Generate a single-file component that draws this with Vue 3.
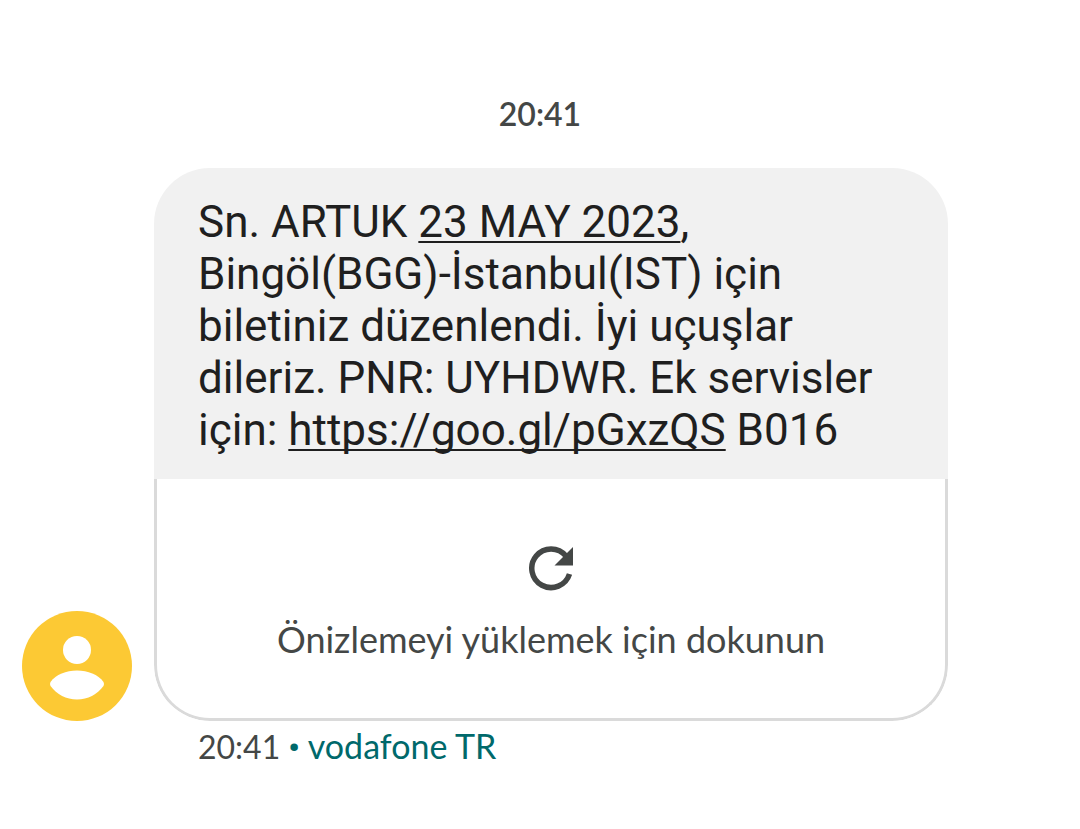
<script setup>
const time = '20:41'
</script>

<template>
  <main class="thread">
    <time class="stamp">{{ time }}</time>
    <div class="message">
      <svg class="avatar" viewBox="0 0 110 110" role="img" aria-label="Contact">
        <circle cx="55" cy="55" r="55" fill="#fcc934" />
        <circle cx="55" cy="39" r="14" fill="#fff" />
        <path d="M28.500 71C34 63.500 44 59.500 55 59.500S76 63.500 81.500 71Q82.500 73 81.500 75C75 83.500 66 88.500 55 88.500S35 83.500 28.500 75Q27.500 73 28.500 71Z" fill="#fff" />
      </svg>
      <article class="bubble">
        <p class="body">
          Sn. ARTUK <a href="#date">23 MAY 2023</a>,<br />
          Bingöl(BGG)-İstanbul(IST) için<br />
          biletiniz düzenlendi. İyi uçuşlar<br />
          dileriz. PNR: UYHDWR. Ek servisler<br />
          için: <a href="#link">https://goo.gl/pGxzQS</a> B016
        </p>
        <button class="preview" type="button">
          <svg class="refresh" viewBox="0 0 46 46" aria-hidden="true">
            <path d="M38 11A19.300 19.300 0 1 0 41.500 29" fill="none" stroke="#444746" stroke-width="5.500" />
            <path d="M45 2V20.500H26.500Z" fill="#444746" />
          </svg>
          <span>Önizlemeyi yüklemek için dokunun</span>
        </button>
      </article>
    </div>
    <footer class="meta">
      <time>{{ time }}</time>
      <span class="dot">•</span>
      <span class="carrier">vodafone TR</span>
    </footer>
  </main>
</template>

<style>
body {
  margin: 0;
  background: #fff;
}
</style>

<style scoped>
.thread {
  display: flex;
  flex-direction: column;
  padding: 92px 132px 60px 22px;
  font-family: Roboto, "Noto Sans", sans-serif;
  color: #444746;
}
.stamp {
  align-self: center;
  margin-left: 110px;
  font: 600 32px/44px Lato, sans-serif;
}
.message {
  display: flex;
  align-items: flex-end;
  gap: 22px;
  margin-top: 32px;
}
.avatar {
  width: 110px;
  height: 110px;
  flex: none;
}
.bubble {
  flex: 1;
  overflow: hidden;
  border-radius: 56px;
}
.body {
  margin: 0;
  padding: 28px 44px 23px;
  background: #f1f1f1;
  color: #1f1f1f;
  font-size: 44px;
  line-height: 52px;
  white-space: nowrap;
}
.body a {
  color: inherit;
  text-decoration-thickness: 2px;
  text-underline-offset: 4px;
  text-decoration-skip-ink: none;
}
.preview {
  display: flex;
  flex-direction: column;
  align-items: center;
  gap: 24px;
  width: 100%;
  padding: 66px 24px 55px;
  border: 3px solid #dadada;
  border-top: 0;
  border-radius: 0 0 56px 56px;
  background: #fff;
  color: #444746;
  font: 36px/48px Lato, sans-serif;
}
.refresh {
  width: 46px;
  height: 46px;
}
.meta {
  display: flex;
  align-items: baseline;
  gap: 8px;
  margin: 3px 0 0 176px;
  font: 32px/44px Lato, sans-serif;
}
.dot {
  color: #00696b;
  font-family: Roboto, sans-serif;
  font-weight: 700;
}
.carrier {
  color: #00696b;
  font-size: 34px;
}
</style>
